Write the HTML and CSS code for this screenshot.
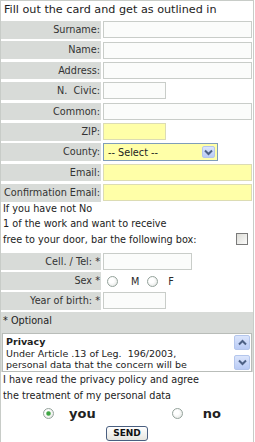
FILE: index.html
```html
<!DOCTYPE html>
<html>
<head>
  <title>Card</title>
  <link rel="stylesheet" href="styles.css">
</head>
<body>
  <div class="card">
    <div class="title">Fill out the card and get as outlined in</div>

    <div class="rows">
      <div class="row"><label class="lbl">Surname:</label><div class="fld"><input class="inp wide" type="text"></div></div>
      <div class="row"><label class="lbl">Name:</label><div class="fld"><input class="inp wide" type="text"></div></div>
      <div class="row"><label class="lbl">Address:</label><div class="fld"><input class="inp wide" type="text"></div></div>
      <div class="row"><label class="lbl">N.&nbsp; Civic:</label><div class="fld"><input class="inp short" type="text"></div></div>
      <div class="row"><label class="lbl">Common:</label><div class="fld"><input class="inp wide" type="text"></div></div>
      <div class="row"><label class="lbl">ZIP:</label><div class="fld"><input class="inp short req" type="text"></div></div>
      <div class="row">
        <label class="lbl">County:</label>
        <div class="fld">
          <div class="select-wrap">
            <select class="sel">
              <option>-- Select --</option>
            </select>
            <span class="sel-btn">
              <svg width="9" height="7" viewBox="0 0 9 7"><path d="M1 1.5 L4.5 5 L8 1.5" fill="none" stroke="#4d6185" stroke-width="2"/></svg>
            </span>
          </div>
        </div>
      </div>
      <div class="row"><label class="lbl">Email:</label><div class="fld"><input class="inp wide req" type="text"></div></div>
      <div class="row"><label class="lbl">Confirmation Email:</label><div class="fld"><input class="inp wide req" type="text"></div></div>
    </div>

    <div class="note">
      <div>If you have not No</div>
      <div>1 of the work and want to receive</div>
      <div class="note-last">free to your door, bar the following box: <input class="chk" type="checkbox"></div>
    </div>

    <div class="rows rows-small">
      <div class="row"><label class="lbl">Cell. / Tel: *</label><div class="fld"><input class="inp mid" type="text"></div></div>
      <div class="row">
        <label class="lbl">Sex *</label>
        <div class="fld sex">
          <input class="rad" type="radio" name="sex"><span class="sex-m">M</span>
          <input class="rad rad-f" type="radio" name="sex"><span class="sex-f">F</span>
        </div>
      </div>
      <div class="row"><label class="lbl">Year of birth: *</label><div class="fld"><input class="inp short" type="text"></div></div>
    </div>

    <div class="optional">
      <div class="optional-label">* Optional</div>
      <div class="privacy">
        <div class="privacy-text">
          <b>Privacy</b><br>
          Under Article .13 of Leg.&nbsp; 196/2003,<br>
          personal data that the concern will be
        </div>
        <div class="scroll">
          <span class="scroll-btn">
            <svg width="9" height="7" viewBox="0 0 9 7"><path d="M1 5.5 L4.5 2 L8 5.5" fill="none" stroke="#4d6185" stroke-width="2"/></svg>
          </span>
          <span class="scroll-btn scroll-down">
            <svg width="9" height="7" viewBox="0 0 9 7"><path d="M1 1.5 L4.5 5 L8 1.5" fill="none" stroke="#4d6185" stroke-width="2"/></svg>
          </span>
        </div>
      </div>
    </div>

    <div class="agree">
      <div>I have read the privacy policy and agree</div>
      <div>the treatment of my personal data</div>
    </div>

    <div class="choice">
      <input class="rad rad-you" type="radio" name="agree" checked><span class="you">you</span>
      <input class="rad rad-no" type="radio" name="agree"><span class="no">no</span>
    </div>

    <div class="actions">
      <button class="send">SEND</button>
    </div>
  </div>
</body>
</html>
```

FILE: styles.css
```css
body {
  margin: 0;
  font-family: "DejaVu Sans", Verdana, sans-serif;
  font-size: 9.7px;
  color: #2a2a2a;
  background: #fff;
}

.card {
  width: 254px;
  box-sizing: border-box;
  border: 1px solid #c8ccc8;
  padding-bottom: 6px;
}

.title {
  height: 18px;
  line-height: 18px;
  padding-left: 3px;
  font-size: 11.2px;
  color: #222;
  background: #fff;
}

.rows {
  display: flex;
  flex-direction: column;
  gap: 2.8px;
  margin-top: 2px;
}

.row {
  display: grid;
  grid-template-columns: 100px 1fr;
  height: 17.6px;
}

.lbl {
  background: #d8dbd8;
  color: #333;
  text-align: right;
  line-height: 17.6px;
  padding-right: 1px;
  white-space: nowrap;
}

.fld {
  display: flex;
  align-items: center;
  padding-left: 2px;
}

.inp {
  box-sizing: border-box;
  height: 17px;
  border: 1px solid #c9cdc9;
  background: #fbfcfb;
  margin: 0;
  padding: 0 2px;
  font: inherit;
}

.inp.wide {
  width: 149px;
}

.inp.short {
  width: 63px;
}

.inp.mid {
  width: 89px;
}

.inp.req {
  background: #ffffa8;
  border-color: #dcdcb4;
}

.select-wrap {
  position: relative;
  width: 115px;
  height: 18px;
}

.sel {
  -webkit-appearance: none;
  appearance: none;
  box-sizing: border-box;
  width: 100%;
  height: 100%;
  margin: 0;
  padding: 0 0 0 4px;
  border: 1px solid #7f9db9;
  border-radius: 0;
  background: #ffffa8;
  font: inherit;
  color: #222;
}

.sel-btn {
  position: absolute;
  top: 3px;
  right: 3px;
  width: 13px;
  height: 12px;
  box-sizing: border-box;
  border: 1px solid #b4c6ec;
  border-radius: 2px;
  background: linear-gradient(#dbe5fc, #b9cbf5);
  display: flex;
  align-items: center;
  justify-content: center;
}

.note {
  margin-top: -1px;
  padding-left: 2px;
  line-height: 15.5px;
  color: #222;
}

.note-last {
  display: flex;
  align-items: center;
}

.chk {
  -webkit-appearance: none;
  appearance: none;
  width: 12px;
  height: 12px;
  margin: 0 5px 0 auto;
  border: 1px solid #7a7a7a;
  background: linear-gradient(135deg, #dcdcd6, #fbfbfb);
}

.rows-small {
  margin-top: 5.5px;
  gap: 2px;
}

.rad {
  -webkit-appearance: none;
  appearance: none;
  width: 11px;
  height: 11px;
  margin: 0;
  border: 1px solid #95a39c;
  border-radius: 50%;
  background: radial-gradient(circle at 40% 40%, #fff 30%, #dcdfdb);
}

.rad:checked {
  background: radial-gradient(circle, #3fa544 0 1.6px, #a6d6a6 2.3px, transparent 2.9px),
              radial-gradient(circle at 40% 40%, #fff 30%, #dcdfdb);
}

.sex .rad {
  margin-left: 4px;
}

.sex-m {
  margin-left: 13px;
}

.sex .rad-f {
  margin-left: 8px;
}

.sex-f {
  margin-left: 10px;
}

.optional {
  margin-top: 2.4px;
  background: #d8dbd8;
}

.optional-label {
  height: 20px;
  line-height: 18px;
  padding-left: 2px;
  color: #222;
}

.privacy {
  position: relative;
  height: 39px;
  margin: 1px 1px 0 1px;
  box-sizing: border-box;
  border: 1px solid #b9bdb9;
  background: #fff;
  overflow: hidden;
}

.privacy-text {
  padding: 2px 20px 0 3px;
  font-size: 9.5px;
  line-height: 11.7px;
  color: #222;
  white-space: nowrap;
}

.scroll {
  position: absolute;
  top: 1px;
  right: 1px;
  bottom: 1px;
  width: 16px;
  display: flex;
  flex-direction: column;
  justify-content: space-between;
}

.scroll-btn {
  height: 15px;
  box-sizing: border-box;
  border: 1px solid #b4c6ec;
  border-radius: 2px;
  background: linear-gradient(#dbe5fc, #b9cbf5);
  display: flex;
  align-items: center;
  justify-content: center;
}

.agree {
  padding-left: 2px;
  line-height: 16px;
  color: #222;
}

.choice {
  display: flex;
  align-items: center;
  height: 19px;
  font-size: 13px;
  font-weight: bold;
  color: #222;
}

.rad-you {
  margin-left: 42px;
}

.you {
  margin-left: 15px;
}

.rad-no {
  margin-left: 76px;
}

.no {
  margin-left: 20px;
}

.actions {
  margin-top: 3px;
  text-align: center;
}

.send {
  height: 15px;
  width: 42px;
  padding: 0;
  border: 1px solid #4a5f80;
  border-radius: 3px;
  background: linear-gradient(#ffffff, #e6e6e0);
  font-family: "DejaVu Sans", Verdana, sans-serif;
  font-size: 9px;
  font-weight: bold;
  color: #111;
  line-height: 13px;
}
```
